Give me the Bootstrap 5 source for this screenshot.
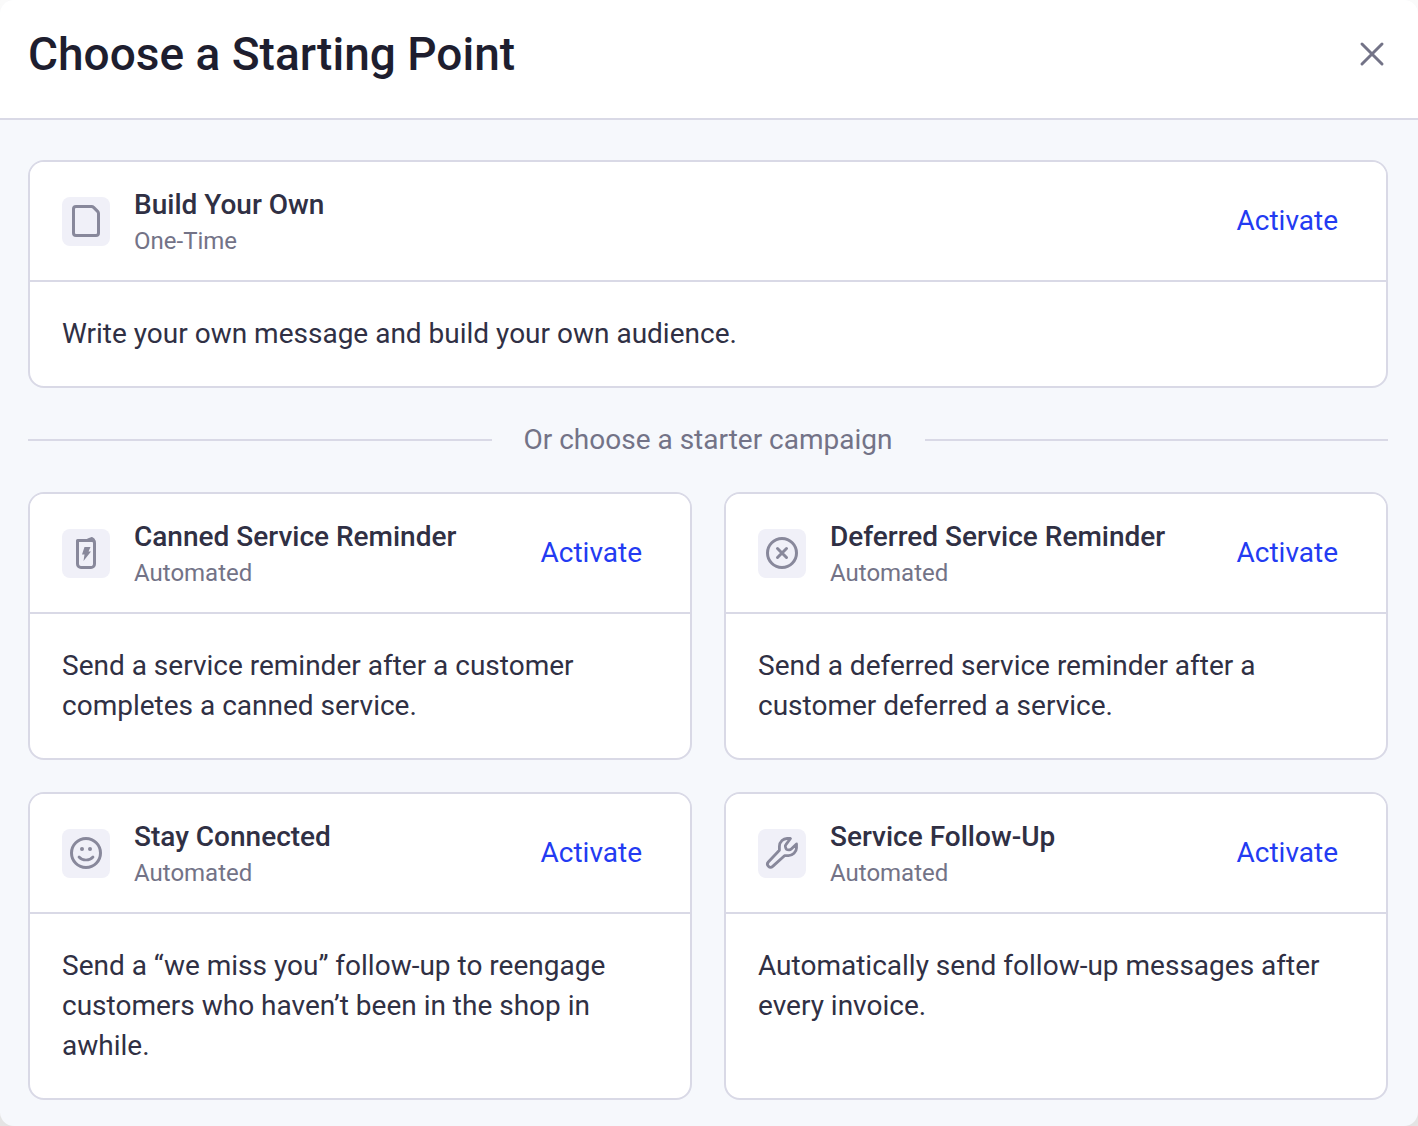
<!DOCTYPE html>
<html lang="en">
<head>
<meta charset="utf-8">
<meta name="viewport" content="width=device-width, initial-scale=1">
<title>Choose a Starting Point</title>
<link href="https://cdn.jsdelivr.net/npm/bootstrap@5.3.0/dist/css/bootstrap.min.css" rel="stylesheet">
<style>
  :root { --line: #d9d9e6; --muted: #737387; --ink: #303044; }
  body { font-family: Roboto, "Liberation Sans", sans-serif; font-size: 28px; line-height: 40px; color: var(--ink); background: linear-gradient(#fafafa, #e4e4e4); }
  .picker { background: #f6f8fc; border-radius: 14px; overflow: hidden; }
  .picker-head { background: #fff; border-bottom: 2px solid var(--line); padding: 24px 28px 34px; }
  .picker-title { font-size: 46px; line-height: 60px; font-weight: 500; color: #1e1e2f; }
  .picker-close { width: 36px; height: 36px; color: var(--muted); }
  .picker-body { padding: 40px 30px 26px 28px; }
  .option { --bs-card-border-width: 2px; --bs-card-border-color: var(--line); --bs-card-border-radius: 16px; --bs-card-inner-border-radius: 14px; --bs-card-cap-bg: #fff; --bs-card-cap-padding-x: 32px; --bs-card-cap-padding-y: 23px; --bs-card-spacer-x: 32px; --bs-card-spacer-y: 32px; color: var(--ink); }
  .option .card-header { gap: 24px; }
  .option-icon { width: 48px; height: 49px; border-radius: 8px; background: #f0f0f8; color: #88889b; }
  .option-title { font-size: 28px; line-height: 40px; font-weight: 500; }
  .option-kind { font-size: 24px; line-height: 32px; color: var(--muted); }
  .option-action { --bs-btn-color: #233bf2; --bs-btn-hover-color: #1526b8; --bs-btn-font-size: 28px; --bs-btn-line-height: 40px; --bs-btn-padding-x: 16px; --bs-btn-padding-y: 8px; --bs-btn-border-width: 0; }
  .divider { gap: 32px; padding: 32px 0; color: var(--muted); }
  .divider hr { border-top: 2px solid var(--line); opacity: 1; }
  .starters { --bs-gutter-x: 32px; --bs-gutter-y: 32px; }
</style>
<script src="https://cdn.jsdelivr.net/npm/bootstrap@5.3.0/dist/js/bootstrap.bundle.min.js" defer></script>
</head>
<body>
<main class="picker min-vh-100">
  <header class="picker-head d-flex align-items-center justify-content-between">
    <h1 class="picker-title mb-0">Choose a Starting Point</h1>
    <button type="button" class="picker-close btn p-0 border-0 d-flex align-items-center justify-content-center" aria-label="Close">
      <svg width="36" height="36" viewBox="0 0 36 36" fill="none" stroke="currentColor" stroke-width="3" stroke-linecap="round"><path d="M8 8l20 20M28 8L8 28"/></svg>
    </button>
  </header>
  <div class="picker-body">
    <section class="option card">
      <div class="card-header d-flex align-items-center">
        <span class="option-icon d-flex flex-shrink-0">
          <svg width="48" height="48" viewBox="0 0 48 48" fill="none" stroke="currentColor" stroke-width="3" stroke-linejoin="round"><path d="M14 9.500h15.500a3 3 0 0 1 2.100.9l4 4a3 3 0 0 1 .9 2.100V36a2.500 2.500 0 0 1-2.500 2.500H14a2.500 2.500 0 0 1-2.500-2.500V12A2.500 2.500 0 0 1 14 9.500z"/></svg>
        </span>
        <div class="flex-grow-1">
          <h2 class="option-title mb-0">Build Your Own</h2>
          <div class="option-kind">One-Time</div>
        </div>
        <button type="button" class="option-action btn">Activate</button>
      </div>
      <div class="card-body"><p class="mb-0">Write your own message and build your own audience.</p></div>
    </section>

    <div class="divider d-flex align-items-center">
      <hr class="flex-grow-1 m-0"><span>Or choose a starter campaign</span><hr class="flex-grow-1 m-0">
    </div>

    <div class="starters row row-cols-1 row-cols-lg-2">
      <div class="col">
        <section class="option card h-100">
          <div class="card-header d-flex align-items-center">
            <span class="option-icon d-flex flex-shrink-0">
              <svg width="48" height="48" viewBox="0 0 48 48" fill="none" stroke="currentColor" stroke-width="3" stroke-linejoin="round" stroke-linecap="round"><path d="M15.500 13v22a3.500 3.500 0 0 0 3.500 3.500h10a3.500 3.500 0 0 0 3.500-3.500V14a2.500 2.500 0 0 0-2.500-2.500H15.500V14"/><path d="M26 10.500l4-1.500 1.500 1 1 2" stroke-width="2"/><path d="M22.500 18H28.500l-2 4.500h2.500L21.500 32l1-6.500H20z" fill="currentColor" stroke="none"/></svg>
            </span>
            <div class="flex-grow-1">
              <h2 class="option-title mb-0">Canned Service Reminder</h2>
              <div class="option-kind">Automated</div>
            </div>
            <button type="button" class="option-action btn">Activate</button>
          </div>
          <div class="card-body"><p class="mb-0">Send a service reminder after a customer completes a canned service.</p></div>
        </section>
      </div>
      <div class="col">
        <section class="option card h-100">
          <div class="card-header d-flex align-items-center">
            <span class="option-icon d-flex flex-shrink-0">
              <svg width="48" height="48" viewBox="0 0 48 48" fill="none" stroke="currentColor" stroke-width="3" stroke-linecap="round"><circle cx="24" cy="24" r="14.500"/><path d="M19.500 19.500l9 9M28.500 19.500l-9 9"/></svg>
            </span>
            <div class="flex-grow-1">
              <h2 class="option-title mb-0">Deferred Service Reminder</h2>
              <div class="option-kind">Automated</div>
            </div>
            <button type="button" class="option-action btn">Activate</button>
          </div>
          <div class="card-body"><p class="mb-0">Send a deferred service reminder after a customer deferred a service.</p></div>
        </section>
      </div>
      <div class="col">
        <section class="option card h-100">
          <div class="card-header d-flex align-items-center">
            <span class="option-icon d-flex flex-shrink-0">
              <svg width="48" height="48" viewBox="0 0 48 48" fill="none" stroke="currentColor" stroke-width="3" stroke-linecap="round"><circle cx="24" cy="24" r="14.500"/><path d="M17 28c3.500 4 10.500 4 14 0" stroke-width="2.700"/><circle cx="20" cy="20" r="2" fill="currentColor" stroke="none"/><circle cx="28" cy="20" r="2" fill="currentColor" stroke="none"/></svg>
            </span>
            <div class="flex-grow-1">
              <h2 class="option-title mb-0">Stay Connected</h2>
              <div class="option-kind">Automated</div>
            </div>
            <button type="button" class="option-action btn">Activate</button>
          </div>
          <div class="card-body"><p class="mb-0">Send a “we miss you” follow-up to reengage customers who haven’t been in the shop in awhile.</p></div>
        </section>
      </div>
      <div class="col">
        <section class="option card h-100">
          <div class="card-header d-flex align-items-center">
            <span class="option-icon d-flex flex-shrink-0">
              <svg width="48" height="48" viewBox="0 0 48 48" fill="none" stroke="currentColor" stroke-width="2.800" stroke-linejoin="round"><path d="M32.500 9.500h-3.500c-2.200 0-3.600.7-5 2.100-1.800 1.800-2.600 3.400-2.600 5.700v3.900L10.300 33c-1.200 1.400-1.100 3.100.1 4.300s3 1.300 4.300.1L26.500 26.700h4c2.300 0 3.800-.8 5.500-2.400 1.700-1.700 2.500-3.200 2.500-5.400v-4L33 20.200c-.6.500-1.200.7-2 .6l-1.800-.2c-.7-.1-1.100-.5-1.300-1.200l-.5-1.700c-.2-.8-.1-1.400.5-2.100z"/></svg>
            </span>
            <div class="flex-grow-1">
              <h2 class="option-title mb-0">Service Follow-Up</h2>
              <div class="option-kind">Automated</div>
            </div>
            <button type="button" class="option-action btn">Activate</button>
          </div>
          <div class="card-body"><p class="mb-0">Automatically send follow-up messages after every invoice.</p></div>
        </section>
      </div>
    </div>
  </div>
</main>
</body>
</html>
